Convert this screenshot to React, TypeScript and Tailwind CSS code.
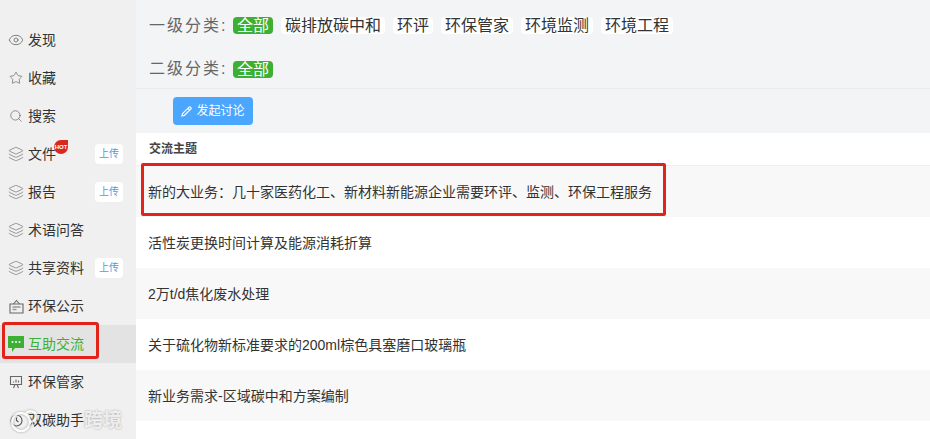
import React from 'react';
import { Eye, Star, Search, Layers, Pencil } from 'lucide-react';

const FONT = "font-['Liberation_Sans','Noto_Sans_CJK_SC',sans-serif]";

const LayerIcon = () => <Layers size={16} strokeWidth={1.1} className="text-[#777]" />;

const NoticeIcon = () => (
  <svg width="15" height="15" viewBox="0 0 15 15" fill="none" stroke="#666" strokeWidth="1.1">
    <path d="M1 5h13v9H1z" />
    <path d="M4.500 5l3-3.500 3 3.500" />
    <path d="M3.500 8h8M3.500 10.500h4" strokeWidth="1.5" stroke="#999" />
  </svg>
);

const ChatIcon = () => (
  <svg width="16" height="16" viewBox="0 0 16 16">
    <path d="M0 0h16v12H7l-3 4v-4H0z" fill="#3cb034" />
    <circle cx="4.500" cy="6" r="1" fill="#fff" />
    <circle cx="8" cy="6" r="1" fill="#fff" />
    <circle cx="11.500" cy="6" r="1" fill="#fff" />
  </svg>
);

const BoardIcon = () => (
  <svg width="14" height="14" viewBox="0 0 14 14" fill="none" stroke="#666" strokeWidth="1.1">
    <path d="M1.500 1.500h11v8h-11z" />
    <path d="M4.500 13l1.500-3.500M9.500 13L8 9.500M4.500 7.500V6.500M7 7.500V4.500M9.500 7.500V5.500" />
  </svg>
);

const BotIcon = () => (
  <svg width="15" height="15" viewBox="0 0 15 15" fill="none" stroke="#555" strokeWidth="1.1">
    <circle cx="7.500" cy="7.500" r="5.500" />
    <path d="M7.500 4.500v3l2 1.500" />
  </svg>
);

const nav = [
  { label: '发现', icon: <Eye size={16} strokeWidth={1.2} className="text-[#666]" /> },
  { label: '收藏', icon: <Star size={14} strokeWidth={1.2} className="text-[#666]" /> },
  { label: '搜索', icon: <Search size={14} strokeWidth={1.2} className="text-[#666]" /> },
  { label: '文件', icon: <LayerIcon />, upload: true, hot: true },
  { label: '报告', icon: <LayerIcon />, upload: true },
  { label: '术语问答', icon: <LayerIcon /> },
  { label: '共享资料', icon: <LayerIcon />, upload: true },
  { label: '环保公示', icon: <NoticeIcon /> },
  { label: '互助交流', icon: <ChatIcon />, active: true },
  { label: '环保管家', icon: <BoardIcon /> },
  { label: '双碳助手', icon: <BotIcon /> },
];

const level1 = ['碳排放碳中和', '环评', '环保管家', '环境监测', '环境工程'];

const topics = [
  '新的大业务：几十家医药化工、新材料新能源企业需要环评、监测、环保工程服务',
  '活性炭更换时间计算及能源消耗折算',
  '2万t/d焦化废水处理',
  '关于硫化物新标准要求的200ml棕色具塞磨口玻璃瓶',
  '新业务需求-区域碳中和方案编制',
];

export default function App() {
  return (
    <div className={`relative w-[930px] h-[439px] overflow-hidden flex bg-white text-[#333] ${FONT}`}>
      <aside className="w-[136px] shrink-0 bg-[#f0f0f0] pt-[21px]">
        {nav.map(item => (
          <div
            key={item.label}
            className={`h-[38px] flex items-center pl-[6px] ${item.active ? 'bg-[#e3e3e3] text-[#3cb034]' : ''}`}
          >
            <span className="w-[20px] mr-[2px] flex justify-center">{item.icon}</span>
            <span className="relative text-sm">
              {item.label}
              {item.hot && (
                <span className="absolute -top-[4px] -right-[12px] w-[14px] h-[14px] rounded-full rounded-tr-[2px] bg-[#d9281e] text-white text-[6px] font-bold leading-[14px] text-center">
                  HOT
                </span>
              )}
            </span>
            {item.upload && (
              <span className="ml-auto mr-[13px] w-[28px] h-[20px] bg-white rounded text-[10px] leading-[20px] text-center text-[#4a9be8]">
                上传
              </span>
            )}
          </div>
        ))}
      </aside>
      <main className="flex-1 min-w-0">
        <div className="bg-[#f3f4f6] h-[133px]">
          <div className="h-[89px] border-b border-[#ebebeb] pl-[13px]">
            <div className="flex items-center h-[51px]">
              <span className="text-base text-[#666] tracking-[2px] w-[84px]">一级分类:</span>
              <span className="bg-[#3cb034] text-white rounded text-base leading-[17px] px-[4px]">全部</span>
              {level1.map(t => (
                <span key={t} className="ml-[8px] bg-white rounded text-base leading-[17px] px-[4px]">{t}</span>
              ))}
            </div>
            <div className="flex items-center h-[36px]">
              <span className="text-base text-[#666] tracking-[2px] w-[84px]">二级分类:</span>
              <span className="bg-[#3cb034] text-white rounded text-base leading-[17px] px-[4px]">全部</span>
            </div>
          </div>
          <div className="pl-[37px] pt-[8px]">
            <button className="w-[80px] h-[28px] bg-[#4ba6ff] rounded text-white text-xs flex items-center justify-center gap-[4px]">
              <Pencil size={11} strokeWidth={2.5} />发起讨论
            </button>
          </div>
        </div>
        <div className="h-[33px] flex items-center pl-[13px] text-xs font-bold text-[#444] border-b border-[#eee]">交流主题</div>
        {topics.map((t, i) => (
          <div key={t} className={`h-[51px] flex items-center pl-[12px] text-sm ${i % 2 === 0 ? 'bg-[#f8f8f8]' : 'bg-white'}`}>
            {t}
          </div>
        ))}
      </main>
      {/* 红色标注框 */}
      <div className="absolute left-[141px] top-[163px] w-[525px] h-[53px] border-[3px] border-[#e2231a] rounded-[2px]" />
      <div className="absolute left-[2px] top-[322px] w-[97px] h-[37px] border-[3px] border-[#e2231a] rounded-[3px]" />
      {/* 水印 */}
      <svg className="absolute left-[9px] top-[408px] opacity-80 drop-shadow-[0_0_1px_#888]" width="30" height="26" viewBox="0 0 30 26" fill="none" stroke="#fff" strokeWidth="2.5">
        <circle cx="12" cy="14" r="9" />
        <path d="M17 5c3-3 9-2 10 2s-2 6-5 7" />
      </svg>
      <div className="absolute left-[84px] top-[411px] text-[19px] leading-[20px] font-bold text-white/80 [text-shadow:0_0_2px_#999]">跨境</div>
    </div>
  );
}
